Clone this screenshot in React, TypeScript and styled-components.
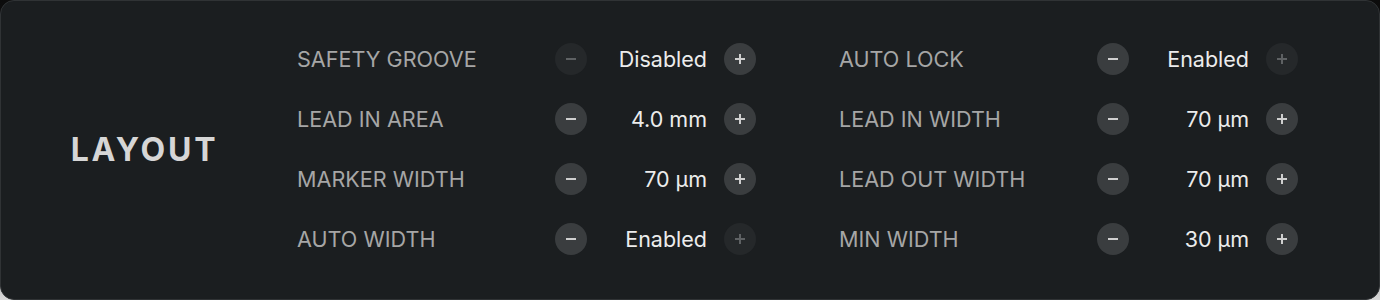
import React from "react";
import styled, { createGlobalStyle } from "styled-components";

const Global = createGlobalStyle`
  html, body { margin: 0; padding: 0; }
  body {
    width: 1380px;
    height: 300px;
    background: linear-gradient(to bottom, #0c0c0c 0%, #2a2a2a 60%, #d8d8d8 100%);
    font-family: Inter, "Noto Sans", sans-serif;
    -webkit-font-smoothing: antialiased;
  }
`;

const Panel = styled.section`
  box-sizing: border-box;
  width: 1380px;
  height: 300px;
  padding-bottom: 2px;
  display: flex;
  align-items: center;
  background: #1b1e20;
  border: 1px solid #303335;
  border-radius: 14px;
`;

const TitleCol = styled.div`
  width: 286px;
  flex: none;
  display: flex;
  justify-content: center;
`;

const Title = styled.h2`
  margin: 0;
  padding-left: 1px;
  font-size: 32px;
  font-weight: 700;
  letter-spacing: 2.8px;
  color: #d6d6d6;
`;

const Grid = styled.div`
  display: grid;
  grid-template-columns: 459px 459px;
  column-gap: 83px;
  margin-left: 10px;
`;

const Column = styled.div`
  display: flex;
  flex-direction: column;
`;

const Row = styled.div`
  height: 60px;
  display: flex;
  align-items: center;
`;

const Label = styled.span`
  flex: 1;
  font-size: 21.6px;
  color: #a6a6a6;
  white-space: nowrap;
`;

const Value = styled.span`
  width: 120px;
  margin-right: 17px;
  text-align: right;
  font-size: 21.5px;
  color: #ececec;
  white-space: nowrap;
`;

const Btn = styled.button<{ $off?: boolean }>`
  width: 32px;
  height: 32px;
  flex: none;
  padding: 0;
  border: none;
  border-radius: 50%;
  display: flex;
  align-items: center;
  justify-content: center;
  background: ${(p) => (p.$off ? "#25282a" : "#3a3d3f")};
  color: ${(p) => (p.$off ? "#5e6163" : "#cfcfcf")};
  cursor: pointer;
`;

const Minus = () => (
  <svg width="10" height="10" viewBox="0 0 10 10">
    <rect x="0" y="4" width="10" height="2" fill="currentColor" />
  </svg>
);
const Plus = () => (
  <svg width="10" height="10" viewBox="0 0 10 10">
    <rect x="0" y="4" width="10" height="2" fill="currentColor" />
    <rect x="4" y="0" width="2" height="10" fill="currentColor" />
  </svg>
);

type Item = { label: string; value: string; minOff?: boolean; maxOff?: boolean };

const left: Item[] = [
  { label: "SAFETY GROOVE", value: "Disabled", minOff: true },
  { label: "LEAD IN AREA", value: "4.0 mm" },
  { label: "MARKER WIDTH", value: "70 µm" },
  { label: "AUTO WIDTH", value: "Enabled", maxOff: true },
];
const right: Item[] = [
  { label: "AUTO LOCK", value: "Enabled", maxOff: true },
  { label: "LEAD IN WIDTH", value: "70 µm" },
  { label: "LEAD OUT WIDTH", value: "70 µm" },
  { label: "MIN WIDTH", value: "30 µm" },
];

const Setting = ({ item }: { item: Item }) => (
  <Row>
    <Label>{item.label}</Label>
    <Btn $off={item.minOff} aria-label="decrease">
      <Minus />
    </Btn>
    <Value>{item.value}</Value>
    <Btn $off={item.maxOff} aria-label="increase">
      <Plus />
    </Btn>
  </Row>
);

export default function App() {
  return (
    <>
      <Global />
      <Panel>
        <TitleCol>
          <Title>LAYOUT</Title>
        </TitleCol>
        <Grid>
          <Column>
            {left.map((i) => (
              <Setting key={i.label} item={i} />
            ))}
          </Column>
          <Column>
            {right.map((i) => (
              <Setting key={i.label} item={i} />
            ))}
          </Column>
        </Grid>
      </Panel>
    </>
  );
}
